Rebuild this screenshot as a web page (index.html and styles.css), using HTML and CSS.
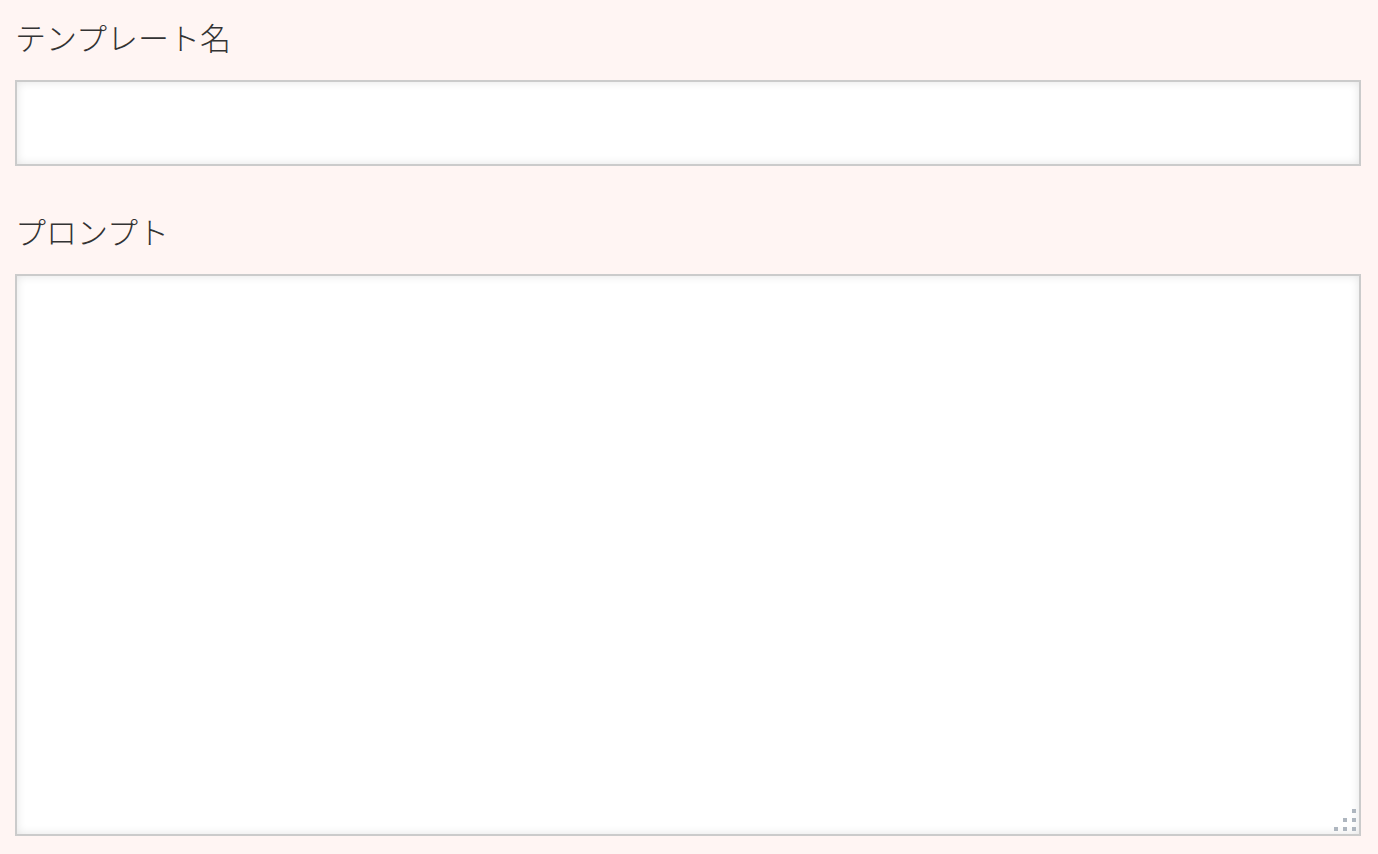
FILE: index.html
```html
<!DOCTYPE html>
<html lang="ja">
<head>
  <meta charset="UTF-8" />
  <meta name="viewport" content="width=device-width, initial-scale=1.0"/>
  <title>テンプレート</title>
  <link rel="stylesheet" href="styles.css">
</head>
<body>
  <form class="template-form">
    <label class="field-label" for="template-name">テンプレート名</label>
    <input class="field-input" id="template-name" type="text" />

    <label class="field-label" for="prompt">プロンプト</label>
    <div class="textarea-wrap">
      <textarea class="field-textarea" id="prompt"></textarea>
      <span class="grip">
        <i></i><i></i><i></i>
        <i></i><i></i><i></i>
        <i></i><i></i><i></i>
      </span>
    </div>
  </form>
</body>
</html>
```

FILE: styles.css
```css
body {
  margin: 0;
  padding: 14px 17px 0 15px;
  background: #fff5f3;
  font-family: "Noto Sans CJK JP", "Noto Sans", sans-serif;
  color: #333;
}
.template-form {
  display: flex;
  flex-direction: column;
}
.field-label {
  display: block;
  font-size: 31px;
  line-height: 45px;
  margin-bottom: 21px;
  font-weight: 300;
}
.field-input,
.field-textarea {
  display: block;
  width: 100%;
  box-sizing: border-box;
  margin: 0;
  border: 2px solid #cbcbcb;
  border-radius: 0;
  background: #fff;
  box-shadow: inset 0 0 10px rgba(0,0,0,0.11);
  font-family: inherit;
  font-size: 20px;
  outline: none;
}
.field-input {
  height: 86px;
  margin-bottom: 42px;
}
.textarea-wrap {
  position: relative;
}
.field-textarea {
  height: 562px;
  resize: none;
}
.grip {
  position: absolute;
  right: 5px;
  bottom: 5px;
  display: grid;
  grid-template-columns: repeat(3, 4px);
  grid-template-rows: repeat(3, 4px);
  gap: 5px;
}
.grip i {
  display: block;
  background: #aeb6bf;
}
.grip i:nth-child(1),
.grip i:nth-child(2),
.grip i:nth-child(4) {
  background: transparent;
}
```
